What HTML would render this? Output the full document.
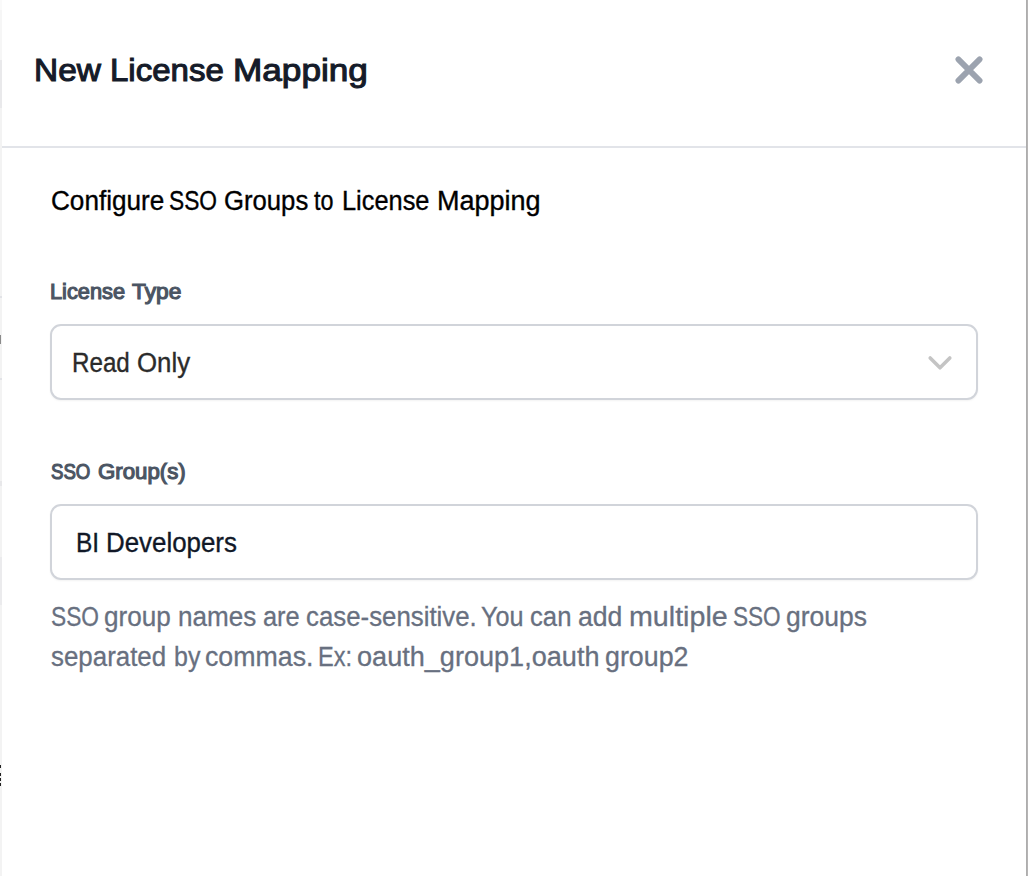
<!DOCTYPE html>
<html>
<head>
<meta charset="utf-8">
<style>
html,body{margin:0;padding:0;}
body{width:1028px;height:876px;position:relative;overflow:hidden;background:#ffffff;font-family:"Liberation Sans",sans-serif;}
.strip{position:absolute;left:0;top:0;width:2px;height:876px;background:#f3f3f3;}
.sp{position:absolute;left:0;width:2px;}
.t{position:absolute;white-space:nowrap;width:1028px;}
.w{position:absolute;top:0;transform-origin:0 0;white-space:nowrap;}
#title{left:0;top:54.3px;font-size:32.2px;line-height:32.2px;color:#151b29;-webkit-text-stroke:1.1px #151b29;}
#sub{left:0;top:188px;font-size:27px;line-height:27px;color:#000000;-webkit-text-stroke:0.35px #000000;}
#lab1{left:0;top:281px;font-size:21.6px;line-height:21.6px;color:#4b5563;-webkit-text-stroke:1.15px #4b5563;}
#val1{left:0;top:350px;font-size:27px;line-height:27px;color:#2b2b2b;-webkit-text-stroke:0.35px #2b2b2b;}
#lab2{left:0;top:461px;font-size:21.6px;line-height:21.6px;color:#4b5563;-webkit-text-stroke:1.15px #4b5563;}
#val2{left:0;top:530px;font-size:27px;line-height:27px;color:#111827;-webkit-text-stroke:0.35px #111827;}
#help1{left:0;top:604px;font-size:27px;line-height:27px;color:#687080;-webkit-text-stroke:0.3px #687080;}
#help2{left:0;top:644px;font-size:27px;line-height:27px;color:#687080;-webkit-text-stroke:0.3px #687080;}
.divider{position:absolute;left:2px;top:146px;width:1024px;height:2px;background:#e2e4e9;}
.box{position:absolute;left:50px;width:924px;height:72px;border:2px solid #d1d4da;border-radius:11px;background:#fff;box-shadow:0 1px 2px rgba(0,0,0,0.05);}
#box1{top:324px;}
#box2{top:504px;}
svg{position:absolute;}
</style>
</head>
<body>
<div class="strip"></div>
<div class="sp" style="top:0;height:10px;background:#fafafa"></div>
<div class="sp" style="top:10px;height:50px;background:#f6f6f6"></div>
<div class="sp" style="top:60px;height:48px;background:#e9e9eb"></div>
<div class="sp" style="top:296px;height:2px;background:#e2e3e7"></div>
<div class="sp" style="top:335px;height:9px;width:1px;background:#8a8a8a"></div>
<div class="sp" style="top:378px;height:2px;background:#e2e3e7"></div>
<div class="sp" style="top:481px;height:5px;background:#e8e8ea"></div>
<div class="sp" style="top:557px;height:48px;background:#ebebed"></div>
<div class="sp" style="top:765px;height:3px;width:1px;background:#222"></div>
<div class="sp" style="top:773px;height:3px;width:1px;background:#222"></div>
<div class="sp" style="top:778px;height:3px;width:1px;background:#222"></div>
<div class="sp" style="top:783px;height:3px;width:1px;background:#222"></div>
<div class="t" id="title"><span class="w" style="left:34.20px;transform:scaleX(1.0381)">New</span><span class="w" style="left:110.20px;transform:scaleX(1.0253)">License</span><span class="w" style="left:233.20px;transform:scaleX(1.0926)">Mapping</span></div>
<svg style="left:949px;top:50px" width="40" height="40" viewBox="0 0 40 40">
  <path d="M9.4 9.4 L30.6 30.6 M30.6 9.4 L9.4 30.6" stroke="#9ca3af" stroke-width="5.8" stroke-linecap="round" fill="none"/>
</svg>
<div class="divider"></div>
<div style="position:absolute;left:1026px;top:0;width:2px;height:876px;background:linear-gradient(to right,#aaaaaa,#b9b7b7)"></div>
<div class="t" id="sub"><span class="w" style="left:50.60px;transform:scaleX(0.9674)">Configure</span><span class="w" style="left:169.40px;transform:scaleX(0.8418)">SSO</span><span class="w" style="left:223.60px;transform:scaleX(0.9515)">Groups</span><span class="w" style="left:314.00px;transform:scaleX(0.8655)">to</span><span class="w" style="left:342.40px;transform:scaleX(0.9396)">License</span><span class="w" style="left:436.60px;transform:scaleX(1.0007)">Mapping</span></div>
<div class="t" id="lab1"><span class="w" style="left:50.40px;transform:scaleX(1.0077)">License</span><span class="w" style="left:131.60px;transform:scaleX(1.0531)">Type</span></div>
<div class="box" id="box1"></div>
<div class="t" id="val1"><span class="w" style="left:72.20px;transform:scaleX(0.8954)">Read</span><span class="w" style="left:136.60px;transform:scaleX(0.9556)">Only</span></div>
<svg style="left:920px;top:350px" width="40" height="30" viewBox="0 0 40 30">
  <path d="M10.2 8 L20 17.8 L29.8 8" stroke="#c4c4c4" stroke-width="3.6" stroke-linecap="round" stroke-linejoin="round" fill="none"/>
</svg>
<div class="t" id="lab2"><span class="w" style="left:51.40px;transform:scaleX(0.8635)">SSO</span><span class="w" style="left:98.20px;transform:scaleX(1.0297)">Group(s)</span></div>
<div class="box" id="box2"></div>
<div class="t" id="val2"><span class="w" style="left:76.40px;transform:scaleX(0.9082)">BI</span><span class="w" style="left:105.60px;transform:scaleX(0.9585)">Developers</span></div>
<div class="t" id="help1"><span class="w" style="left:50.60px;transform:scaleX(0.8409)">SSO</span><span class="w" style="left:104.20px;transform:scaleX(0.9667)">group</span><span class="w" style="left:178.20px;transform:scaleX(0.9655)">names</span><span class="w" style="left:263.00px;transform:scaleX(0.9403)">are</span><span class="w" style="left:306.00px;transform:scaleX(0.9564)">case-sensitive.</span><span class="w" style="left:481.00px;transform:scaleX(0.9339)">You</span><span class="w" style="left:530.40px;transform:scaleX(0.9526)">can</span><span class="w" style="left:578.40px;transform:scaleX(0.9854)">add</span><span class="w" style="left:628.60px;transform:scaleX(1.0607)">multiple</span><span class="w" style="left:732.60px;transform:scaleX(0.8360)">SSO</span><span class="w" style="left:786.20px;transform:scaleX(0.9800)">groups</span></div>
<div class="t" id="help2"><span class="w" style="left:50.60px;transform:scaleX(0.9591)">separated</span><span class="w" style="left:173.60px;transform:scaleX(0.9267)">by</span><span class="w" style="left:205.40px;transform:scaleX(0.9903)">commas.</span><span class="w" style="left:317.60px;transform:scaleX(0.8733)">Ex:</span><span class="w" style="left:357.20px;transform:scaleX(1.0032)">oauth_group1,oauth</span><span class="w" style="left:604.80px;transform:scaleX(0.9932)">group2</span></div>
</body>
</html>
